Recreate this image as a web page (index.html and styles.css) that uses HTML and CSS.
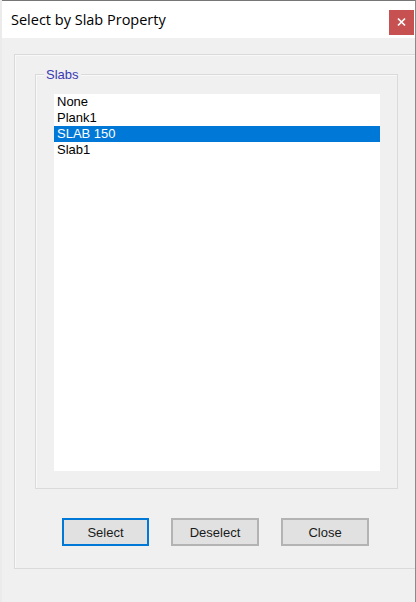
FILE: index.html
```html
<!DOCTYPE html>
<html>
<head>
<meta charset="utf-8">
<link rel="stylesheet" href="styles.css">
</head>
<body>
<div class="window">
  <div class="titlebar">
    <div class="title">Select by Slab Property</div>
    <div class="close">
      <svg width="25" height="25" viewBox="0 0 25 25"><path d="M9 8.5 L16 15.5 M16 8.5 L9 15.5" stroke="#fff" stroke-width="1.7" fill="none"/></svg>
    </div>
  </div>
  <div class="client">
    <div class="panel">
      <div class="group">
        <span class="legend">Slabs</span>
        <div class="listbox">
          <div class="item">None</div>
          <div class="item">Plank1</div>
          <div class="item selected">SLAB 150</div>
          <div class="item">Slab1</div>
        </div>
      </div>
      <div class="buttons">
        <div class="btn default">Select</div>
        <div class="btn">Deselect</div>
        <div class="btn">Close</div>
      </div>
    </div>
  </div>
</div>
</body>
</html>
```
FILE: styles.css
```css
html, body {
  margin: 0;
  padding: 0;
}
body {
  width: 416px;
  height: 602px;
  background: #ebebeb;
  overflow: hidden;
  font-family: "Liberation Sans", Arial, sans-serif;
}
.window {
  margin-left: 2px;
  width: 414px;
  height: 602px;
  box-sizing: border-box;
  border-top: 1px solid #767676;
  border-right: 1px solid #8a8a8a;
  background: #f0f0f0;
  display: flex;
  flex-direction: column;
}
.titlebar {
  height: 37px;
  background: #ffffff;
  display: flex;
  align-items: flex-start;
  justify-content: space-between;
}
.title {
  font-family: "Open Sans", "Noto Sans", sans-serif;
  font-size: 14.5px;
  line-height: 20px;
  color: #000;
  padding: 9px 0 0 9px;
}
.close {
  width: 25px;
  height: 25px;
  margin-top: 9px;
  margin-right: 1px;
  background: #c75050;
}
.close svg {
  display: block;
}
.client {
  flex: 1;
  background: #f0f0f0;
}
.panel {
  margin: 16px 0 0 12px;
  height: 515px;
  box-sizing: border-box;
  border: 1px solid #dadada;
  border-right: none;
  box-shadow: inset 1px 1px 0 #f8f8f8;
  padding: 19px 0 0 20px;
}
.group {
  position: relative;
  width: 363px;
  height: 415px;
  box-sizing: border-box;
  border: 1px solid #dadada;
  box-shadow: inset 1px 1px 0 #f8f8f8;
  padding: 19px 0 0 18px;
}
.legend {
  position: absolute;
  left: 8px;
  top: -8px;
  padding: 0 2px;
  background: #f0f0f0;
  color: #3a3ab0;
  font-size: 13px;
  line-height: 16px;
}
.listbox {
  width: 326px;
  height: 377px;
  background: #ffffff;
}
.item {
  height: 16px;
  font-size: 13px;
  line-height: 16px;
  padding-left: 3px;
  color: #000;
}
.item.selected {
  background: #0078d7;
  color: #ffffff;
}
.buttons {
  display: flex;
  gap: 22px;
  margin: 29px 0 0 27px;
}
.btn {
  width: 88px;
  height: 28px;
  box-sizing: border-box;
  border: 2px solid #b3b3b3;
  background: #e1e1e1;
  color: #1a1a1a;
  font-size: 13px;
  display: flex;
  align-items: center;
  justify-content: center;
}
.btn.default {
  width: 87px;
  border-color: #0078d7;
}
```
